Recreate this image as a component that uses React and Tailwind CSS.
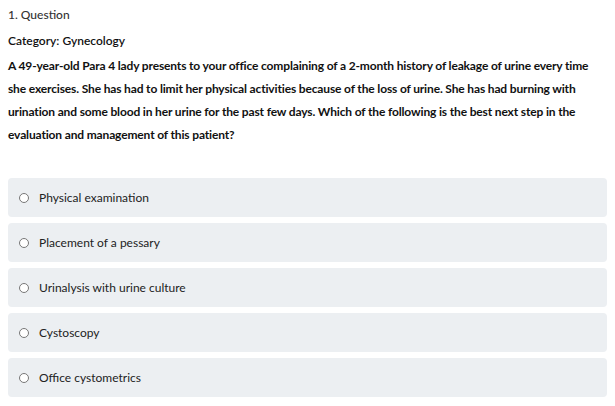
import React from "react";

const options = [
  "Physical examination",
  "Placement of a pessary",
  "Urinalysis with urine culture",
  "Cystoscopy",
  "Office cystometrics",
];

const App = () => {
  return (
    <div className="px-2 pt-[6px] bg-white text-[#222] font-['Lato','Noto_Sans',sans-serif]">
      <div className="text-[12px] leading-[18px] text-[#333] font-medium">1. Question</div>
      <div className="mt-[8px] text-[12px] leading-[18px] font-semibold text-[#111]">Category: Gynecology</div>
      <p className="mt-[4px] text-[12px] leading-[23px] font-bold text-[#111] tracking-[-0.15px]">
        A 49-year-old Para 4 lady presents to your office complaining of a 2-month history of leakage of urine every time
        she exercises. She has had to limit her physical activities because of the loss of urine. She has had burning with
        urination and some blood in her urine for the past few days. Which of the following is the best next step in the
        evaluation and management of this patient?
      </p>

      <div className="mt-[32px] flex flex-col gap-[6px]">
        {options.map((opt, i) => (
          <label key={i} className="flex items-center h-[39px] rounded-[4px] bg-[#eceff2] pl-[11px]">
            <span className="w-[10px] h-[10px] rounded-full border border-[#777] bg-white"></span>
            <span className="ml-[10px] text-[12px] text-[#222]">{opt}</span>
          </label>
        ))}
      </div>
    </div>
  );
};

export default App;
